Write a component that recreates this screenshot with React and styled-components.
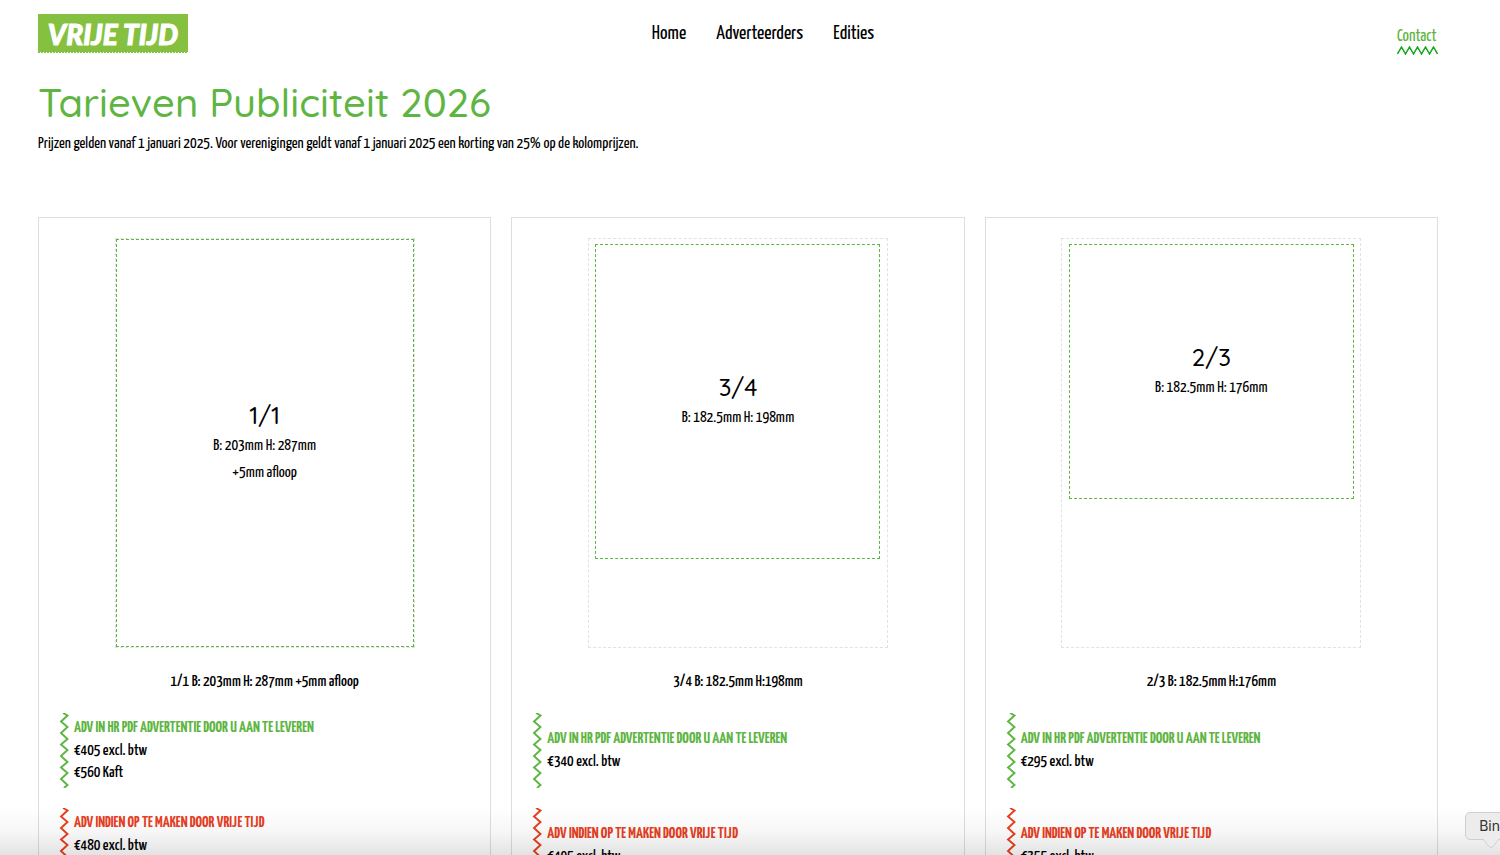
import React from 'react';
import styled, { createGlobalStyle } from 'styled-components';

const GlobalStyle = createGlobalStyle`
  :root {
    --green: #5eb542;
    --red: #e8401f;
    --border: #dedede;
    --font-body: 'Yanone Kaffeesatz', 'Liberation Sans Narrow', 'Liberation Sans', sans-serif;
    --font-heading: Quicksand, Lato, sans-serif;
  }

  * {
    box-sizing: border-box;
  }

  body {
    margin: 0;
    background: #fff;
    color: #000;
    font-family: var(--font-body);
    font-size: 16px;
    line-height: 22px;
  }

  h1, h2, h3, p, ul {
    margin: 0;
    padding: 0;
    font-weight: 400;
  }

  a {
    color: inherit;
    text-decoration: none;
  }
`;

const StyledPage = styled.div`
  height: 100vh;
  padding: 0 62px 0 38px;
  overflow: hidden;
`;

const StyledHeader = styled.header`
  display: grid;
  grid-template-columns: 1fr auto 1fr;
  align-items: start;
  padding-top: 14px;
`;

const StyledLogo = styled.a`
  display: flex;
  flex-direction: column;
  width: 150px;
  color: #fff;
  font-family: Lato, sans-serif;
  font-size: 28px;
  font-style: italic;
  font-weight: 900;
  line-height: 36px;
  text-align: center;
  -webkit-text-stroke: 1px #fff;

  span {
    padding-top: 2px;
    background: #86c040;
  }

  svg {
    display: block;
  }
`;

const StyledNav = styled.nav`
  display: flex;
  gap: 30px;
  padding: 7px 0 0 50px;
  font-size: 20px;
  line-height: 26px;
`;

const StyledContact = styled.a`
  display: flex;
  flex-direction: column;
  justify-self: end;
  padding-top: 14px;
  color: var(--green);
  font-size: 17px;
  line-height: 18px;
`;

const StyledIntro = styled.section`
  padding-top: 22px;

  h1 {
    color: var(--green);
    font-family: var(--font-heading);
    font-size: 40px;
    font-weight: 500;
    line-height: 50px;
  }

  p {
    padding-top: 6px;
  }
`;

const StyledGrid = styled.main`
  display: grid;
  grid-template-columns: repeat(3, 1fr);
  gap: 20px;
  padding-top: 62px;
`;

const StyledCard = styled.article`
  display: flex;
  flex-direction: column;
  align-items: center;
  padding: 20px;
  border: 1px solid var(--border);
`;

const StyledSheet = styled.div`
  display: flex;
  justify-content: center;
  align-items: start;
  width: 300px;
  height: 410px;
  padding-top: ${({ $full }) => ($full ? 0 : 5)}px;
  border: 1px dashed #e2e2e2;
`;

const StyledFormat = styled.div`
  display: flex;
  flex-direction: column;
  justify-content: center;
  align-items: center;
  width: ${({ $width }) => $width}px;
  height: ${({ $height }) => $height}px;
  padding-bottom: 2px;
  border: 1px dashed var(--green);
  line-height: 27px;

  h2 {
    font-family: var(--font-heading);
    font-size: 24px;
    font-weight: 500;
    line-height: 34px;
  }
`;

const StyledCaption = styled.h3`
  padding: 23px 0 20px;
  font-size: 16px;
  font-weight: 500;
`;

const StyledPrices = styled.ul`
  display: flex;
  flex-direction: column;
  gap: 20px;
  width: 100%;
  list-style: none;
`;

const StyledPrice = styled.li`
  display: flex;
  align-items: center;
  gap: 5px;
  min-height: 75px;
  color: ${({ $color }) => $color};

  h4 {
    margin: 0;
    padding-bottom: 1px;
    font-size: 16px;
    line-height: 22px;
    text-transform: uppercase;
  }

  p {
    color: #000;
    font-weight: 500;
  }
`;

const StyledDock = styled.div`
  position: fixed;
  right: 0;
  bottom: 0;
  left: 0;
  height: 48px;
  background: linear-gradient(rgba(0, 0, 0, 0), rgba(0, 0, 0, 0.03) 50%, rgba(0, 0, 0, 0.11));
  pointer-events: none;
`;

const StyledTooltip = styled.div`
  position: fixed;
  right: -15px;
  bottom: 15px;
  padding: 0 14px 0 13px;
  border: 1px solid #cfcfcf;
  border-radius: 5px;
  background: #ececec;
  color: #333;
  font-family: Inter, sans-serif;
  font-size: 14px;
  line-height: 26px;

  svg {
    position: absolute;
    top: 25px;
    left: 16px;
  }
`;

const Waves = () => (
  <svg width="41" height="9" viewBox="0 0 41 9" fill="none" stroke="#14a81c" strokeWidth="1.5">
    <path d="M.5 8L4.500 1L8.500 8L12.500 1L16.500 8L20.500 1L24.500 8L28.500 1L32.500 8L36.500 1L40.500 8" />
  </svg>
);

const ZigZag = () => (
  <svg width="10" height="75" viewBox="0 0 10 75" fill="none" stroke="currentColor" strokeWidth="1.9">
    <path d="M4 0L8.500 2.500L2 8.500L8.500 14L2 20L8.500 26L2 31.500L8.500 37L2 43L8.500 49L2 54.500L8.500 60L2 66L8.500 72L5 75" />
  </svg>
);

const LogoEdge = () => (
  <svg width="150" height="2" viewBox="0 0 150 2">
    <path d="M0 .5H150" stroke="#86c040" strokeDasharray="2 1" />
  </svg>
);

const formats = [
  {
    name: '1/1',
    size: ['B: 203mm H: 287mm', '+5mm afloop'],
    caption: '1/1 B: 203mm H: 287mm +5mm afloop',
    width: 298,
    height: 408,
    supplied: ['€405 excl. btw', '€560 Kaft'],
    designed: ['€480 excl. btw', '€635 Kaft'],
  },
  {
    name: '3/4',
    size: ['B: 182.5mm H: 198mm'],
    caption: '3/4 B: 182.5mm H:198mm',
    width: 285,
    height: 315,
    supplied: ['€340 excl. btw'],
    designed: ['€405 excl. btw'],
  },
  {
    name: '2/3',
    size: ['B: 182.5mm H: 176mm'],
    caption: '2/3 B: 182.5mm H:176mm',
    width: 285,
    height: 255,
    supplied: ['€295 excl. btw'],
    designed: ['€355 excl. btw'],
  },
];

const Price = ({ title, lines, color }) => (
  <StyledPrice $color={color}>
    <ZigZag />
    <div>
      <h4>{title}</h4>
      {lines.map((line, i) => (
        <p key={i}>{line}</p>
      ))}
    </div>
  </StyledPrice>
);

const App = () => (
  <>
    <GlobalStyle />
    <StyledPage>
      <StyledHeader>
        <StyledLogo href="#">
          <span>VRIJE TIJD</span>
          <LogoEdge />
        </StyledLogo>
        <StyledNav>
          <a href="#home">Home</a>
          <a href="#adverteerders">Adverteerders</a>
          <a href="#edities">Edities</a>
        </StyledNav>
        <StyledContact href="#contact">
          Contact
          <Waves />
        </StyledContact>
      </StyledHeader>

      <StyledIntro>
        <h1>Tarieven Publiciteit 2026</h1>
        <p>
          Prijzen gelden vanaf 1 januari 2025. Voor verenigingen geldt vanaf 1 januari 2025 een
          korting van 25% op de kolomprijzen.
        </p>
      </StyledIntro>

      <StyledGrid>
        {formats.map(({ name, size, caption, width, height, supplied, designed }) => (
          <StyledCard key={name}>
            <StyledSheet $full={name === '1/1'}>
              <StyledFormat $width={width} $height={height}>
                <h2>{name}</h2>
                {size.map((line, i) => (
                  <p key={i}>{line}</p>
                ))}
              </StyledFormat>
            </StyledSheet>
            <StyledCaption>{caption}</StyledCaption>
            <StyledPrices>
              <Price
                title="Adv in HR PDF advertentie door u aan te leveren"
                lines={supplied}
                color="var(--green)"
              />
              <Price
                title="Adv indien op te maken door Vrije Tijd"
                lines={designed}
                color="var(--red)"
              />
            </StyledPrices>
          </StyledCard>
        ))}
      </StyledGrid>
    </StyledPage>

    <StyledDock />
    <StyledTooltip role="tooltip">
      Bin
      <svg width="18" height="11" viewBox="0 0 18 11">
        <path d="M0 0L7 8.500Q9 10.500 11 8.500L18 0" fill="#ececec" stroke="#cfcfcf" />
        <path d="M0 0H18" stroke="#ececec" />
      </svg>
    </StyledTooltip>
  </>
);

export default App;
